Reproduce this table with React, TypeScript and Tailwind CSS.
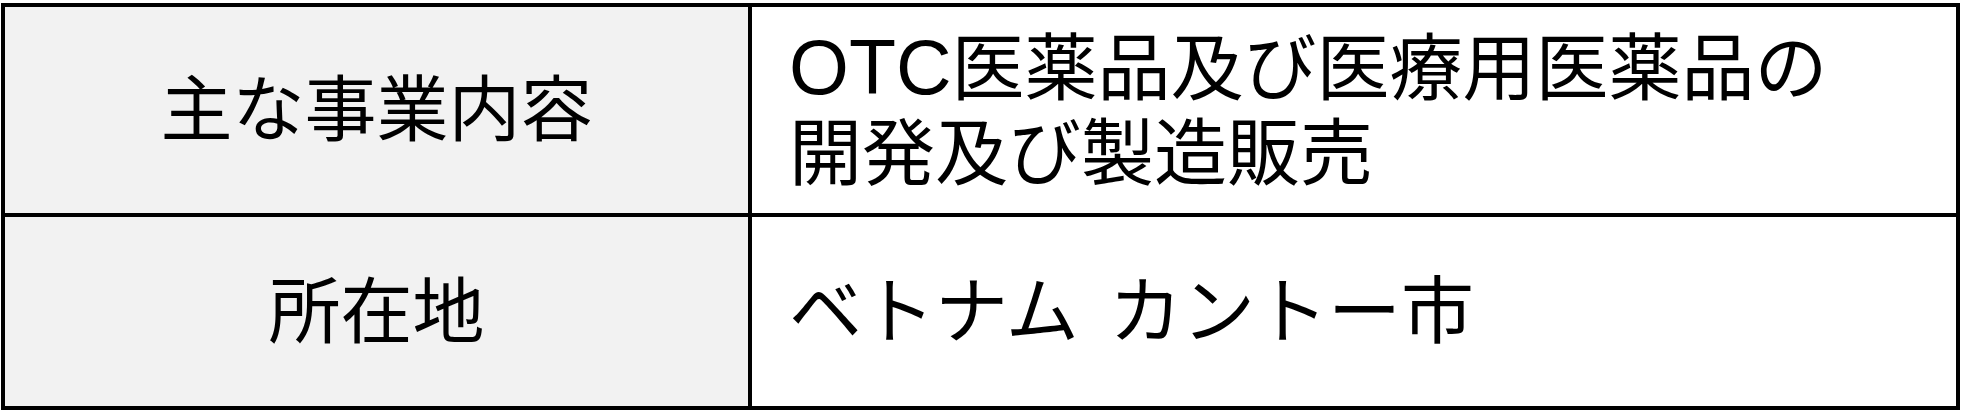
export default function App() {
  const font = { fontFamily: '"Liberation Sans", "Noto Sans CJK JP", sans-serif' }

  return (
    <div className="bg-white w-[1964px] h-[414px] pt-[3px] pl-[1px]" style={font}>
      <div className="w-[1959px] border-4 border-black text-black">
        <div className="grid grid-cols-[747px_1fr] h-[210px] border-b-4 border-black">
          <div className="bg-[#f2f2f2] border-r-4 border-black flex items-center justify-center text-[72px]">
            主な事業内容
          </div>
          <div className="flex flex-col justify-center pl-[37px] text-[73px] leading-[85px]">
            <div>
              <span className="text-[77px]">OTC</span>医薬品及び医療用医薬品の
            </div>
            <div>開発及び製造販売</div>
          </div>
        </div>
        <div className="grid grid-cols-[747px_1fr] h-[189px]">
          <div className="bg-[#f2f2f2] border-r-4 border-black flex items-center justify-center text-[72px]">
            所在地
          </div>
          <div className="flex items-center pl-[37px] text-[73px] [word-spacing:10px]">ベトナム カントー市</div>
        </div>
      </div>
    </div>
  )
}
